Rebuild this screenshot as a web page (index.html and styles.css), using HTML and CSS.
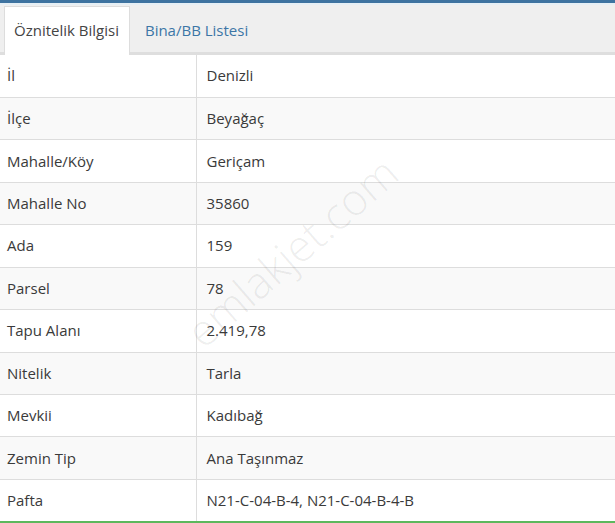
FILE: index.html
```html
<!DOCTYPE html>
<html lang="tr">
<head>
<meta charset="utf-8">
<title>Öznitelik Bilgisi</title>
<link rel="stylesheet" href="styles.css">
</head>
<body>
<div class="panel">
  <div class="topbar"></div>
  <ul class="tabs">
    <li class="tab active">Öznitelik Bilgisi</li>
    <li class="tab">Bina/BB Listesi</li>
  </ul>
  <table class="info">
    <tbody>
      <tr><td>İl</td><td>Denizli</td></tr>
      <tr><td>İlçe</td><td>Beyağaç</td></tr>
      <tr><td>Mahalle/Köy</td><td>Geriçam</td></tr>
      <tr><td>Mahalle No</td><td>35860</td></tr>
      <tr><td>Ada</td><td>159</td></tr>
      <tr><td>Parsel</td><td>78</td></tr>
      <tr><td>Tapu Alanı</td><td>2.419,78</td></tr>
      <tr><td>Nitelik</td><td>Tarla</td></tr>
      <tr><td>Mevkii</td><td>Kadıbağ</td></tr>
      <tr><td>Zemin Tip</td><td>Ana Taşınmaz</td></tr>
      <tr><td>Pafta</td><td>N21-C-04-B-4, N21-C-04-B-4-B</td></tr>
    </tbody>
  </table>
  <div class="watermark">emlakjet.com</div>
</div>
</body>
</html>
```
FILE: styles.css
```css
html, body {
  margin: 0;
  padding: 0;
  background: #ffffff;
}
body {
  font-family: "Open Sans", "Noto Sans", sans-serif;
  font-size: 15px;
  color: #3a3a3a;
}
.panel {
  position: relative;
  width: 615px;
  height: 523px;
  overflow: hidden;
  border-bottom: 2px solid #5cb85c;
  box-sizing: border-box;
}
.topbar {
  height: 3px;
  background: #3e73a0;
  border-bottom: 2px solid #e6eff5;
}
.tabs {
  list-style: none;
  margin: 0;
  padding: 1px 0 0 4px;
  display: flex;
  background: #efefef;
  border-bottom: 3px solid #dedede;
  height: 46px;
}
.tab {
  padding: 0 10px;
  line-height: 46px;
  color: #3c76a6;
  border: 1px solid transparent;
  border-bottom: 0;
  margin-bottom: -3px;
  height: 49px;
  box-sizing: border-box;
}
.tab.active {
  background: #ffffff;
  color: #444444;
  border-color: #dddddd;
  padding: 0 10px 0 9px;
}
.tab + .tab {
  margin-left: 4px;
}
.info {
  width: 100%;
  border-collapse: collapse;
}
.info td {
  height: 42.45px;
  padding: 0 10px;
  border-top: 1px solid #dddddd;
  vertical-align: middle;
  box-sizing: border-box;
  line-height: 21px;
}
.info tr:first-child td {
  border-top: 0;
}
.info td:first-child {
  width: 196px;
  padding-left: 7px;
  border-right: 1px solid #dddddd;
  box-sizing: border-box;
}
.info tr:nth-child(even) td {
  background: #f9f9f9;
}
.watermark {
  position: absolute;
  left: 212px;
  top: 300px;
  font-size: 44px;
  font-weight: 300;
  color: rgba(0, 0, 0, 0.07);
  transform: rotate(-41deg);
  transform-origin: 0 100%;
  white-space: nowrap;
  pointer-events: none;
}
```
